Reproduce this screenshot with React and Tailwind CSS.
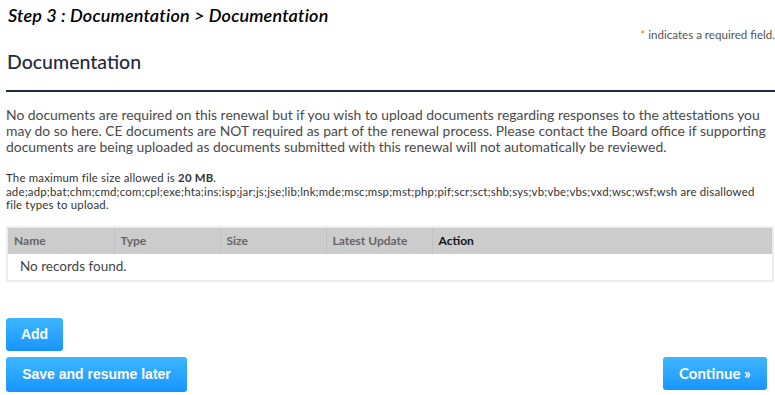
export default function App() {
    const columns = ["Name", "Type", "Size", "Latest Update"];

    return (
        <div className="w-[775px] h-[395px] overflow-hidden bg-white font-['Lato',sans-serif] text-[#4a4a4a]">
            {/* Page title */}
            <div className="pl-[8px] pt-[3px] h-[28px]">
                <h1 className="text-[18px] leading-[24px] italic font-semibold text-black tracking-[0.15px]">
                    Step 3 : Documentation &gt; Documentation
                </h1>
            </div>
            <div className="flex justify-end h-[14px]">
                <span className="text-[11.6px] leading-[14px] text-[#555]">
                    <span className="text-[#e07b00]">*</span> indicates a required field.
                </span>
            </div>

            {/* Section header */}
            <div className="pl-[6px] mt-[8px]">
                <h2 className="text-[19.5px] leading-[24px] font-medium text-[#1f2b3d] pl-[1px]">Documentation</h2>
                <div className="mt-[16px] h-[2px] bg-[#1f2b3d]"></div>
            </div>

            {/* Instructions */}
            <div className="pl-[6px] pr-[2px] mt-[15px]">
                <p className="text-[13.9px] leading-[16px] text-[#4a4a4a]">
                    No documents are required on this renewal but if you wish to upload documents regarding responses to the attestations you may do so here. CE documents are NOT required as part of the renewal process. Please contact the Board office if supporting documents are being uploaded as documents submitted with this renewal will not automatically be reviewed.
                </p>
                <p className="mt-[16px] pr-[8px] text-[11.4px] leading-[13.5px] tracking-[0.2px] text-[#333]">
                    The maximum file size allowed is <span className="font-bold">20 MB</span>.
                    <br />
                    ade;adp;bat;chm;cmd;com;cpl;exe;hta;ins;isp;jar;js;jse;lib;lnk;mde;msc;msp;mst;php;pif;scr;sct;shb;sys;vb;vbe;vbs;vxd;wsc;wsf;wsh are disallowed file types to upload.
                </p>
            </div>

            {/* Documents table */}
            <div className="ml-[6px] mr-[1px] mt-[14px] border-2 border-[#ececec]">
                <table className="w-full text-left border-collapse">
                    <thead className="bg-[#cccccc]">
                        <tr className="h-[26px]">
                            {columns.map((col) => (
                                <th key={col} className="w-[106px] px-[6px] text-[12px] font-bold text-[#666] border-r border-[#c2c2c2]">
                                    {col}
                                </th>
                            ))}
                            <th className="px-[6px] text-[12px] font-bold text-[#111]">Action</th>
                        </tr>
                    </thead>
                    <tbody>
                        <tr className="h-[26px] bg-white">
                            <td colSpan={5} className="px-[12px] text-[13.5px] text-[#444]">No records found.</td>
                        </tr>
                    </tbody>
                </table>
            </div>

            {/* Actions */}
            <div className="pl-[6px] mt-[36px]">
                <button className="w-[57px] h-[33px] rounded-[3px] bg-gradient-to-b from-[#3db6ff] to-[#1695ff] text-white text-[14px] font-bold font-['Liberation_Sans',sans-serif]">
                    Add
                </button>
            </div>
            <div className="flex justify-between items-start pl-[6px] pr-[8px] mt-[6px]">
                <button className="w-[181px] h-[35px] rounded-[3px] bg-gradient-to-b from-[#3db6ff] to-[#1695ff] text-white text-[14px] font-bold font-['Liberation_Sans',sans-serif]">
                    Save and resume later
                </button>
                <button className="w-[104px] h-[33px] rounded-[3px] bg-gradient-to-b from-[#3db6ff] to-[#1695ff] text-white text-[15px] font-bold">
                    Continue »
                </button>
            </div>
        </div>
    );
}
